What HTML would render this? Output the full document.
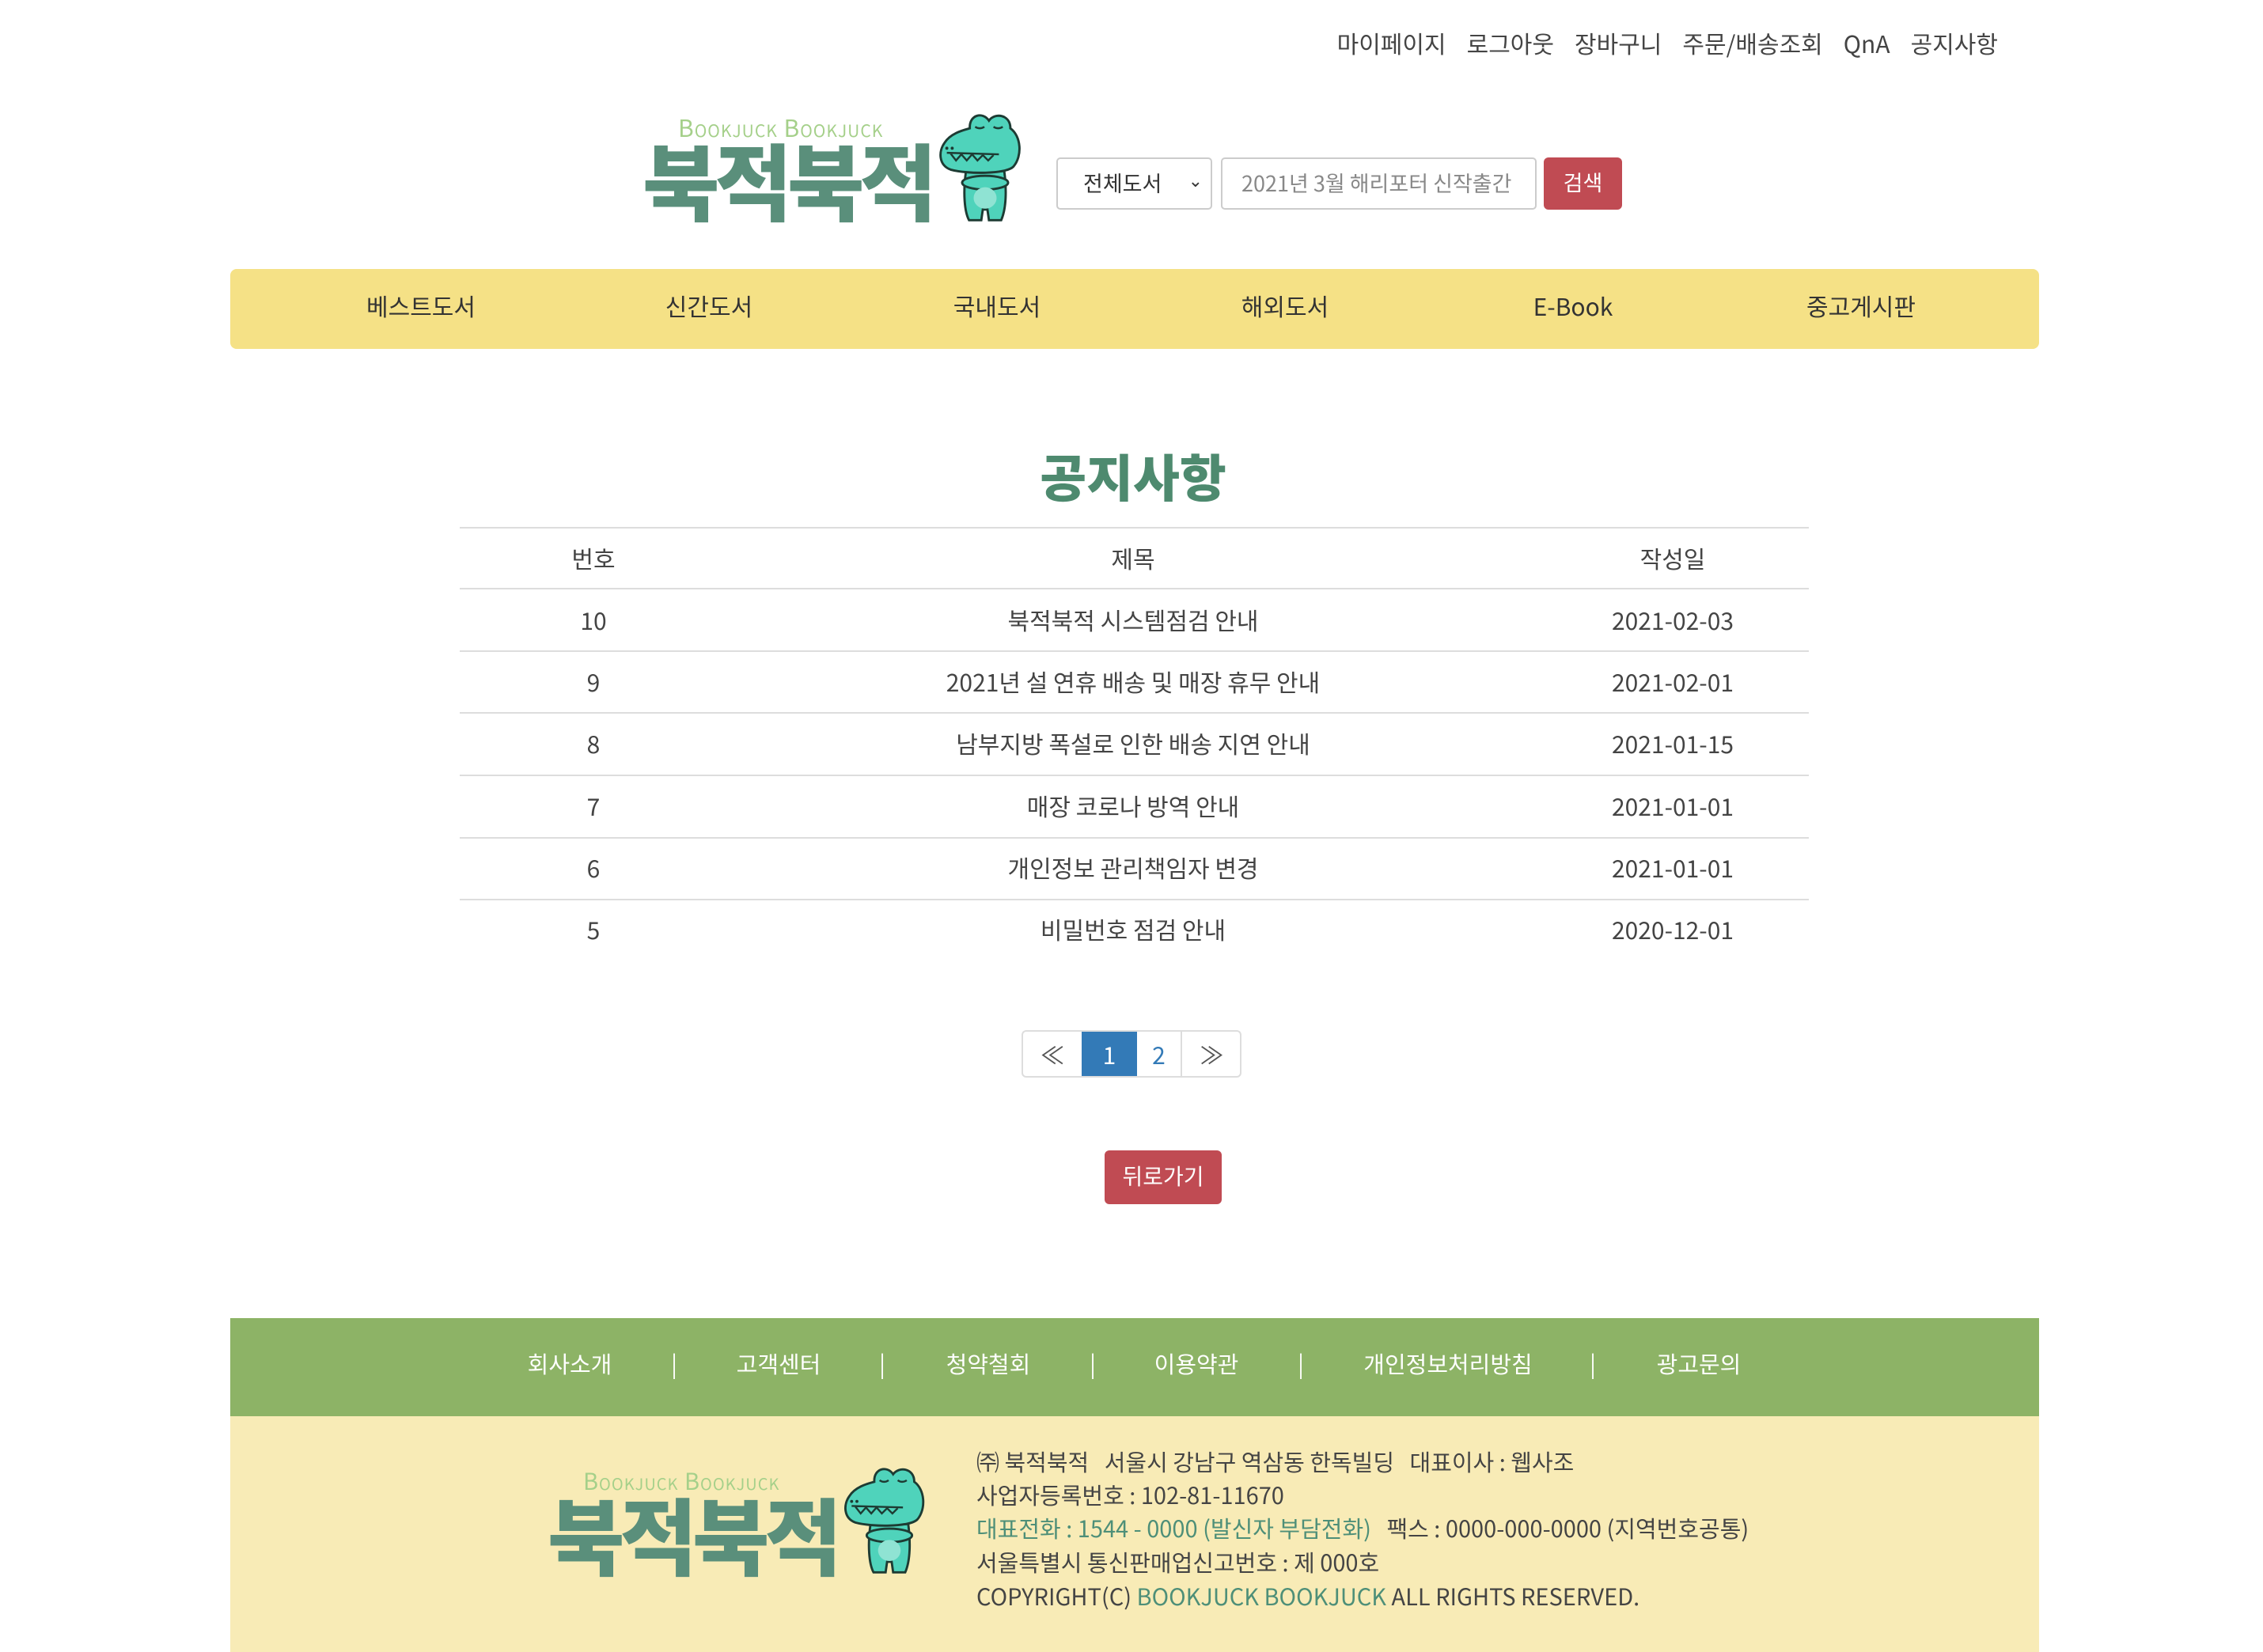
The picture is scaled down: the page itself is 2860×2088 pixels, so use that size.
<!DOCTYPE html>
<html><head><meta charset="utf-8">
<style>
*{margin:0;padding:0;box-sizing:border-box}
body{width:2860px;height:2088px;background:#fff;position:relative;overflow:hidden;font-family:"Noto Sans CJK KR","Liberation Sans",sans-serif;color:#444}
.a{position:absolute;white-space:nowrap}
.top{top:32px;right:335px;font-size:30px;color:#444}
.top span{margin-left:26px}
.sel{left:1335px;top:199px;width:197px;height:66px;border:2px solid #ccc;border-radius:5px;font-size:27px;color:#333;padding:10px 0 0 32px}
.sel b{position:absolute;right:10px;top:10px;font-weight:normal;font-size:22px}
.inp{left:1543px;top:199px;width:399px;height:66px;border:2px solid #ccc;border-radius:5px;font-size:27px;color:#888;padding:10px 0 0 24px}
.btn{background:#c04b53;color:#fff;border-radius:6px;text-align:center}
.nav{left:291px;top:340px;width:2286px;height:101px;background:#f5e186;border-radius:8px}
.nav span{position:absolute;top:24px;font-size:30px;color:#333;transform:translateX(-50%)}
h1{position:absolute;left:0;width:2864px;text-align:center;top:555px;font-size:64px;color:#4e8a6f;font-weight:900}
.line{position:absolute;left:581px;width:1705px;height:2px;background:#ddd}
.c{position:absolute;font-size:30px;color:#444;transform:translate(-50%,-50%);white-space:nowrap}
.pg{left:1291px;top:1302px;width:278px;height:60px;border:2px solid #ddd;border-radius:6px;overflow:hidden}
.pg div{position:absolute;top:0;height:58px;text-align:center;line-height:56px;font-size:30px}
.fg{left:291px;top:1666px;width:2286px;height:124px;background:#8db366}
.fg span{position:absolute;top:36px;color:#fff;font-size:29px;transform:translateX(-50%)}
.fy{left:291px;top:1790px;width:2286px;height:298px;background:#f8ebb6}
.ft{left:1234px;font-size:29px;color:#444}
.g{color:#4e8f78}
</style></head><body>
<div class="a top"><span>마이페이지</span><span>로그아웃</span><span>장바구니</span><span>주문/배송조회</span><span>QnA</span><span>공지사항</span></div>

<div class="a" style="left:857px;top:138px;font-size:30px;color:#a5d08a;letter-spacing:1px;font-variant:small-caps">Bookjuck Bookjuck</div>
<div class="a" style="left:812px;top:160px;font-size:106px;font-weight:900;color:#5a8f7b;letter-spacing:-6px;line-height:130px">북적북적</div>
<svg class="a" style="left:1182px;top:137px" width="126" height="150" viewBox="0 0 130 155">
<g stroke="#1d3b33" stroke-width="3" fill="#4fd3bb">
<path d="M40 82 C36 110 38 135 44 146 L60 146 L62 132 L68 132 L70 146 L86 146 C93 130 93 105 90 82 Z"/>
<path d="M12 45 C20 32 38 28 45 26 C44 8 62 4 70 16 C78 5 98 8 98 26 C112 36 114 62 102 76 C92 86 42 86 20 80 C4 74 4 56 12 45 Z"/>
<ellipse cx="65" cy="97" rx="30" ry="9"/>
</g>
<ellipse cx="65" cy="117" rx="15" ry="14" fill="#8fe3d3"/>
<path d="M15 58 L83 60 M20 59 L27 68 L34 60 L41 68 L48 60 L55 68 L62 61 L69 68 L76 61" stroke="#1d3b33" stroke-width="2.5" fill="none"/>
<path d="M52 24 Q58 28 64 24 M76 24 Q82 28 88 24" stroke="#1d3b33" stroke-width="2.5" fill="none"/>
<circle cx="15" cy="52" r="2" fill="#1d3b33"/><circle cx="22" cy="52" r="2" fill="#1d3b33"/>
</svg>

<div class="a sel">전체도서<b>⌄</b></div>
<div class="a inp">2021년 3월 해리포터 신작출간</div>
<div class="a btn" style="left:1951px;top:199px;width:99px;height:66px;line-height:62px;font-size:27px">검색</div>

<div class="a nav">
<span style="left:241px">베스트도서</span><span style="left:605px">신간도서</span><span style="left:969px">국내도서</span><span style="left:1333px">해외도서</span><span style="left:1697px">E-Book</span><span style="left:2061px">중고게시판</span>
</div>

<h1>공지사항</h1>
<div class="line" style="top:666px"></div>
<div class="line" style="top:743px"></div>
<div class="line" style="top:822px"></div>
<div class="line" style="top:900px"></div>
<div class="line" style="top:979px"></div>
<div class="line" style="top:1058px"></div>
<div class="line" style="top:1136px"></div>

<div class="c" style="left:750px;top:705px">번호</div><div class="c" style="left:1432px;top:705px">제목</div><div class="c" style="left:2114px;top:705px">작성일</div>
<div class="c" style="left:750px;top:783px">10</div><div class="c" style="left:1432px;top:783px">북적북적 시스템점검 안내</div><div class="c" style="left:2114px;top:783px">2021-02-03</div>
<div class="c" style="left:750px;top:861px">9</div><div class="c" style="left:1432px;top:861px">2021년 설 연휴 배송 및 매장 휴무 안내</div><div class="c" style="left:2114px;top:861px">2021-02-01</div>
<div class="c" style="left:750px;top:939px">8</div><div class="c" style="left:1432px;top:939px">남부지방 폭설로 인한 배송 지연 안내</div><div class="c" style="left:2114px;top:939px">2021-01-15</div>
<div class="c" style="left:750px;top:1018px">7</div><div class="c" style="left:1432px;top:1018px">매장 코로나 방역 안내</div><div class="c" style="left:2114px;top:1018px">2021-01-01</div>
<div class="c" style="left:750px;top:1096px">6</div><div class="c" style="left:1432px;top:1096px">개인정보 관리책임자 변경</div><div class="c" style="left:2114px;top:1096px">2021-01-01</div>
<div class="c" style="left:750px;top:1174px">5</div><div class="c" style="left:1432px;top:1174px">비밀번호 점검 안내</div><div class="c" style="left:2114px;top:1174px">2020-12-01</div>

<div class="a pg">
<div style="left:0;width:74px;color:#555">≪</div>
<div style="left:74px;width:70px;background:#337ab7;color:#fff">1</div>
<div style="left:144px;width:57px;color:#337ab7;border-right:2px solid #ddd">2</div>
<div style="left:201px;width:75px;color:#555">≫</div>
</div>
<div class="a btn" style="left:1396px;top:1454px;width:148px;height:68px;line-height:64px;font-size:28px">뒤로가기</div>

<div class="a fg">
<span style="left:429px">회사소개</span><span style="left:561px">|</span><span style="left:693px">고객센터</span><span style="left:824px">|</span><span style="left:958px">청약철회</span><span style="left:1090px">|</span><span style="left:1221px">이용약관</span><span style="left:1353px">|</span><span style="left:1539px">개인정보처리방침</span><span style="left:1722px">|</span><span style="left:1856px">광고문의</span>
</div>
<div class="a fy"></div>
<div class="a" style="left:737px;top:1850px;font-size:29px;color:#a5d08a;letter-spacing:1px;font-variant:small-caps">Bookjuck Bookjuck</div>
<div class="a" style="left:692px;top:1872px;font-size:106px;font-weight:900;color:#5a8f7b;letter-spacing:-6px;line-height:130px">북적북적</div>
<svg class="a" style="left:1062px;top:1848px" width="124" height="148" viewBox="0 0 130 155">
<g stroke="#1d3b33" stroke-width="3" fill="#4fd3bb">
<path d="M40 82 C36 110 38 135 44 146 L60 146 L62 132 L68 132 L70 146 L86 146 C93 130 93 105 90 82 Z"/>
<path d="M12 45 C20 32 38 28 45 26 C44 8 62 4 70 16 C78 5 98 8 98 26 C112 36 114 62 102 76 C92 86 42 86 20 80 C4 74 4 56 12 45 Z"/>
<ellipse cx="65" cy="97" rx="30" ry="9"/>
</g>
<ellipse cx="65" cy="117" rx="15" ry="14" fill="#8fe3d3"/>
<path d="M15 58 L83 60 M20 59 L27 68 L34 60 L41 68 L48 60 L55 68 L62 61 L69 68 L76 61" stroke="#1d3b33" stroke-width="2.5" fill="none"/>
<path d="M52 24 Q58 28 64 24 M76 24 Q82 28 88 24" stroke="#1d3b33" stroke-width="2.5" fill="none"/>
<circle cx="15" cy="52" r="2" fill="#1d3b33"/><circle cx="22" cy="52" r="2" fill="#1d3b33"/>
</svg>
<div class="a ft" style="top:1826px">㈜ 북적북적 &nbsp; 서울시 강남구 역삼동 한독빌딩 &nbsp; 대표이사 : 웹사조</div>
<div class="a ft" style="top:1868px">사업자등록번호 : 102-81-11670</div>
<div class="a ft" style="top:1910px"><span class="g">대표전화 : 1544 - 0000 (발신자 부담전화)</span> &nbsp; 팩스 : 0000-000-0000 (지역번호공통)</div>
<div class="a ft" style="top:1953px">서울특별시 통신판매업신고번호 : 제 000호</div>
<div class="a ft" style="top:1996px">COPYRIGHT(C) <span class="g">BOOKJUCK BOOKJUCK</span> ALL RIGHTS RESERVED.</div>
</body></html>
